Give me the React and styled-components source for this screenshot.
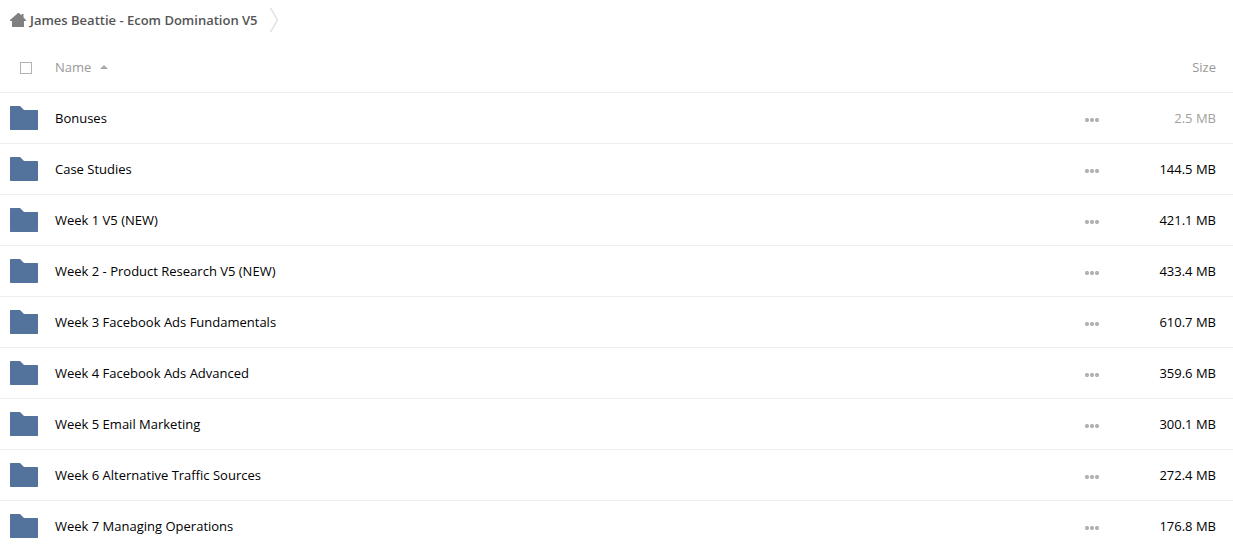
import React, { useState } from "react";
import styled, { createGlobalStyle } from "styled-components";

const folders = [
  { name: "Bonuses", size: "2.5 MB", small: true },
  { name: "Case Studies", size: "144.5 MB" },
  { name: "Week 1 V5 (NEW)", size: "421.1 MB" },
  { name: "Week 2 - Product Research V5 (NEW)", size: "433.4 MB" },
  { name: "Week 3 Facebook Ads Fundamentals", size: "610.7 MB" },
  { name: "Week 4 Facebook Ads Advanced", size: "359.6 MB" },
  { name: "Week 5 Email Marketing", size: "300.1 MB" },
  { name: "Week 6 Alternative Traffic Sources", size: "272.4 MB" },
  { name: "Week 7 Managing Operations", size: "176.8 MB" },
];

const HomeIcon = () => (
  <svg width="16" height="14" viewBox="0 0 16 14" fill="#808080" aria-hidden="true">
    <path d="M8 0H9L11.5 2.5V1H13.5V4.5L16 7V8H14V14H2V8H0V7Z" />
  </svg>
);

const Chevron = () => (
  <svg width="9" height="24" viewBox="0 0 9 24" fill="none" stroke="#dddddd" strokeWidth="1.3" aria-hidden="true">
    <path d="M0.5 0L7.5 12L0.5 24" />
  </svg>
);

const FolderIcon = () => (
  <svg width="28" height="24" viewBox="0 0 28 24" fill="#54739c" aria-hidden="true">
    <path d="M0 0.5L0.5 0H10L14 4H27.5L28 4.5V23.5L27.5 24H0.5L0 23.5Z" />
  </svg>
);

const DotsIcon = () => (
  <svg width="14" height="4" viewBox="0 0 14 4" fill="#b2b2b2" aria-hidden="true">
    <circle cx="2" cy="2" r="2.1" />
    <circle cx="7" cy="2" r="2.1" />
    <circle cx="12" cy="2" r="2.1" />
  </svg>
);

const App = () => {
  const [ascending, setAscending] = useState(true);
  const rows = ascending ? folders : [...folders].reverse();

  return (
    <>
      <GlobalStyle />
      <Breadcrumb aria-label="Breadcrumb">
        <Crumb href="#">
          <HomeIcon />
          James Beattie - Ecom Domination V5
        </Crumb>
        <Chevron />
      </Breadcrumb>
      <FileTable>
        <thead>
          <tr>
            <HeadCell $width="55px">
              <Checkbox type="checkbox" aria-label="Select all" />
            </HeadCell>
            <LabelCell aria-sort={ascending ? "ascending" : "descending"}>
              <SortButton onClick={() => setAscending(!ascending)}>
                Name
                <SortArrow $down={!ascending} />
              </SortButton>
            </LabelCell>
            <HeadCell $width="44px" />
            <LabelCell $width="112px" $right>Size</LabelCell>
          </tr>
        </thead>
        <tbody>
          {rows.map((folder) => (
            <tr key={folder.name}>
              <IconCell>
                <FolderIcon />
              </IconCell>
              <Cell>
                <FolderLink href="#">{folder.name}</FolderLink>
              </Cell>
              <Cell>
                <MoreButton aria-label={`Actions for ${folder.name}`}>
                  <DotsIcon />
                </MoreButton>
              </Cell>
              <SizeCell $small={folder.small}>{folder.size}</SizeCell>
            </tr>
          ))}
        </tbody>
      </FileTable>
    </>
  );
};

const GlobalStyle = createGlobalStyle`
  * {
    box-sizing: border-box;
  }
  body {
    margin: 0;
    background: #ffffff;
    color: #000000;
    font-family: "Open Sans", sans-serif;
    font-size: 13px;
    line-height: 20px;
  }
  svg {
    display: block;
    flex: none;
  }
`;

const Breadcrumb = styled.nav`
  display: flex;
  align-items: center;
  gap: 12px;
  height: 40px;
  margin-bottom: 4px;
  padding: 0 10px;
`;

const Crumb = styled.a`
  display: flex;
  align-items: center;
  gap: 4px;
  color: #555555;
  font-weight: 600;
  text-decoration: none;
`;

const FileTable = styled.table`
  width: 100%;
  table-layout: fixed;
  border-collapse: separate;
  border-spacing: 0;
`;

const HeadCell = styled.th`
  width: ${(props) => props.$width || "auto"};
  height: 49px;
  padding: 0;
  border-bottom: 1px solid #eeeeee;
`;

const LabelCell = styled(HeadCell)`
  padding: 0 ${(props) => (props.$right ? "17px" : "0")} 2px 0;
  color: #999999;
  font-weight: 400;
  text-align: ${(props) => (props.$right ? "right" : "left")};
`;

const Checkbox = styled.input`
  display: block;
  appearance: none;
  width: 12px;
  height: 12px;
  margin: 0 0 0 20px;
  border: 1px solid #b2b2b2;
  background: #ffffff;
  &:checked {
    background: #54739c;
  }
`;

const SortButton = styled.button`
  display: flex;
  align-items: center;
  gap: 9px;
  padding: 0;
  border: 0;
  background: none;
  color: inherit;
  font: inherit;
  cursor: pointer;
`;

const SortArrow = styled.span`
  border: 4px solid transparent;
  border-top-width: 0;
  border-bottom-color: #aaaaaa;
  transform: ${(props) => (props.$down ? "rotate(180deg)" : "none")};
`;

const Cell = styled.td`
  height: 51px;
  padding: 0;
  border-bottom: 1px solid #eeeeee;
`;

const IconCell = styled(Cell)`
  padding-left: 10px;
`;

const SizeCell = styled(Cell)`
  padding-right: 17px;
  color: ${(props) => (props.$small ? "#a0a0a0" : "#000000")};
  text-align: right;
`;

const FolderLink = styled.a`
  color: inherit;
  text-decoration: none;
`;

const MoreButton = styled.button`
  display: block;
  padding: 13px 8px 10px;
  border: 0;
  background: none;
  cursor: pointer;
`;

export default App;
